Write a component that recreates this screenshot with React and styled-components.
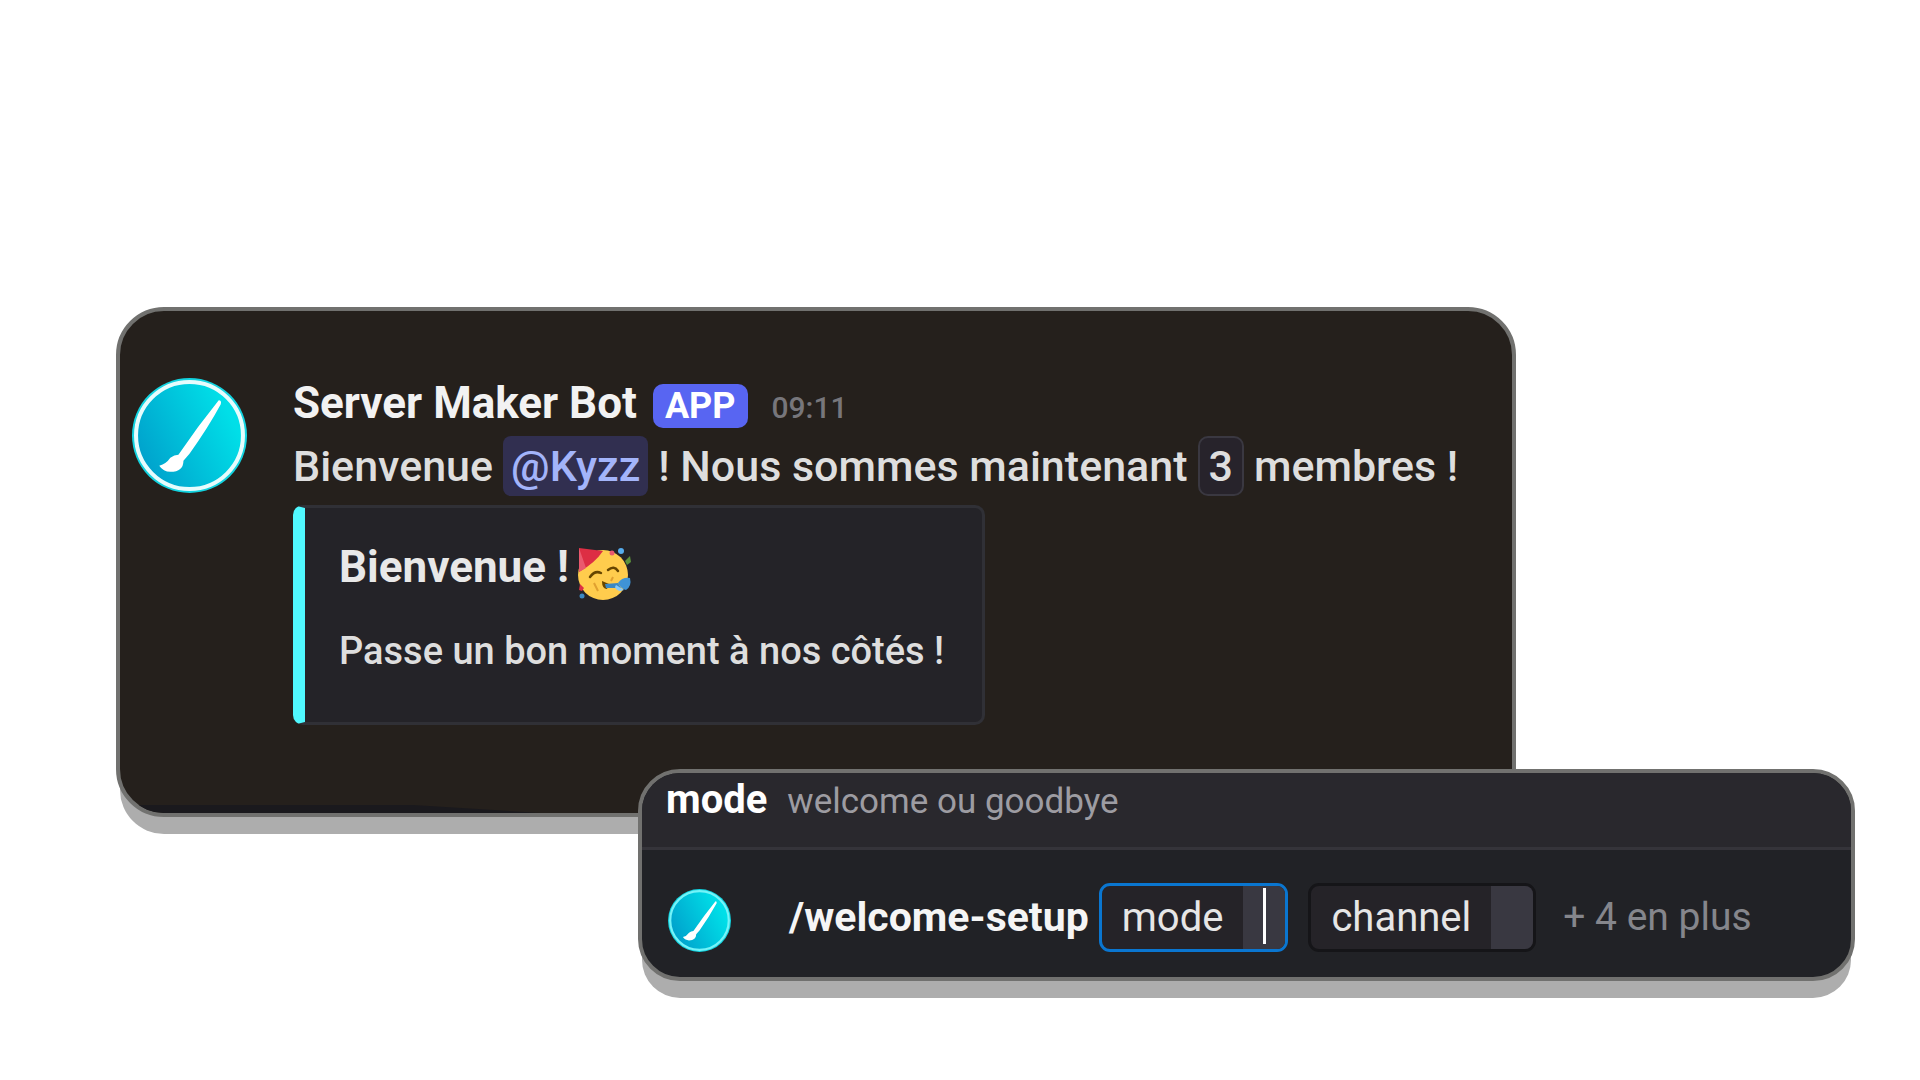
import React from "react";
import styled, { createGlobalStyle } from "styled-components";

const GlobalStyle = createGlobalStyle`
  * { box-sizing: border-box; }
  body { margin: 0; background: #fff; font-family: Roboto, "Noto Sans", sans-serif; }
`;

const Page = styled.main`
  display: flex;
  flex-direction: column;
  padding: 307px 65px 82px 116px;
`;

const Card = styled.section`
  width: 100%;
  border: 4px solid #71716f;
  overflow: hidden;
  box-shadow: 0 21px 0 -4px #adadad;
`;

const ChatCard = styled(Card)`
  max-width: 1400px;
  border-radius: 48px;
  background: #25201c;
`;

const CommandCard = styled(Card)`
  position: relative;
  max-width: 1217px;
  margin: -48px 0 0 auto;
  border-radius: 42px;
  background: #212226;
`;

const Message = styled.article`
  display: flex;
  align-items: flex-start;
  gap: 46px;
  padding: 67px 12px 80px;
`;

const Avatar = styled.svg`
  flex: none;
  display: block;
  width: ${(p) => p.$size}px;
  height: ${(p) => p.$size}px;
`;

const Content = styled.div`
  flex: 1;
  min-width: 0;
`;

const Heading = styled.header`
  display: flex;
  align-items: baseline;
  height: 58px;
  line-height: 50px;
`;

const Author = styled.h2`
  margin: 0;
  color: #f2f2f2;
  font-size: 44px;
  font-weight: 700;
  line-height: 50px;
`;

const Badge = styled.span`
  margin-left: 16px;
  padding: 0 12px;
  border-radius: 10px;
  background: #5865f2;
  color: #fff;
  font-size: 36px;
  font-weight: 700;
  line-height: 44px;
`;

const Time = styled.time`
  margin-left: 24px;
  color: #77767b;
  font-size: 30px;
  font-weight: 500;
`;

const Line = styled.p`
  display: flex;
  align-items: center;
  margin: 0;
  color: #dedede;
  font-size: 43px;
  font-weight: 500;
  line-height: 60px;
  white-space: nowrap;
`;

const Mention = styled.a`
  margin: 0 10px;
  padding: 0 8px;
  border-radius: 8px;
  background: #312f50;
  color: #a3b4fa;
  text-decoration: none;
`;

const Count = styled.code`
  margin: 0 10px;
  padding: 0 9px;
  border: 2px solid #3a3841;
  border-radius: 10px;
  background: #27232b;
  font-family: inherit;
  line-height: 56px;
`;

const Embed = styled.div`
  width: fit-content;
  margin-top: 9px;
  padding: 33px 38px 41px 34px;
  border: 3px solid #303036;
  border-left: 12px solid #50f8ff;
  border-radius: 10px;
  background: #242328;
`;

const EmbedTitle = styled.h3`
  display: flex;
  align-items: flex-start;
  gap: 9px;
  margin: 0;
  color: #e8e8e8;
  font-size: 44px;
  font-weight: 700;
  line-height: 52px;
`;

const Emoji = styled.svg`
  width: 54px;
  height: 60px;
  padding-top: 6px;
`;

const EmbedText = styled.p`
  margin: 20px 0 0;
  color: #dedede;
  font-size: 38px;
  font-weight: 500;
  line-height: 60px;
`;

const Wave = styled.svg`
  display: block;
  width: 100%;
  height: 8px;
`;

const Hint = styled.header`
  display: flex;
  align-items: baseline;
  gap: 20px;
  height: 77px;
  padding-left: 24px;
  border-bottom: 3px solid #35343a;
  background: #29282d;
  line-height: 54px;
`;

const HintName = styled.strong`
  color: #fff;
  font-size: 40px;
`;

const HintText = styled.span`
  color: #9d9ca2;
  font-size: 35px;
`;

const CommandRow = styled.form`
  display: flex;
  align-items: flex-end;
  padding: 33px 24px 25px 26px;
  font-size: 40px;
  line-height: 69px;
  white-space: nowrap;
`;

const CommandName = styled.strong`
  margin: 0 10px 0 58px;
  color: #f5f5f5;
  font-size: 41px;
`;

const Option = styled.label`
  display: flex;
  align-items: stretch;
  height: 69px;
  margin-right: 20px;
  border: 3px solid ${(p) => (p.$active ? "#0a76d0" : "#151518")};
  border-radius: 11px;
  overflow: hidden;
  background: #252328;
  color: #e6e6e6;
  line-height: 63px;
`;

const OptionName = styled.span`
  padding: 0 20px;
`;

const OptionValue = styled.input`
  width: 42px;
  padding: 0;
  border: 0;
  outline: 0;
  background: ${(p) => (p.$active ? "linear-gradient(#fff, #fff) 20px 2px / 3px 56px no-repeat" : "none")} #393841;
`;

const More = styled.button`
  padding: 0 7px;
  border: 0;
  background: none;
  color: #85868c;
  font: inherit;
  font-size: 39px;
`;

function BotAvatar({ size, id, ring }) {
  return (
    <Avatar $size={size} viewBox="0 0 114 114" role="img" aria-label="Server Maker Bot">
      <defs>
        <linearGradient id={id} x1="0.1" y1="0.75" x2="0.9" y2="0.35">
          <stop offset="0" stopColor="#00a4cd" />
          <stop offset="1" stopColor="#00dfe8" />
        </linearGradient>
      </defs>
      <circle cx="57" cy="57" r="57" fill="#12d3e0" />
      <circle cx="57" cy="57" r="53" fill={`url(#${id})`} stroke={ring} strokeWidth="4" />
      <path
        d="M86 22Q89 22 88 26Q75 50 57 75L51 82Q51 93 38 93Q31 93 27 87Q34 85 38 79Q42 76 46 76Q65 48 86 22Z"
        fill="#fff"
      />
    </Avatar>
  );
}

function PartyFace() {
  return (
    <Emoji viewBox="0 0 54 54" role="img" aria-label="fête">
      <circle cx="25" cy="28" r="25" fill="#ffcc4d" />
      <path d="M1 1L25 4Q17 16 1 25Z" fill="#dd2e44" />
      <path d="M1 1L8 21L1 25Z" fill="#ea596e" />
      <path d="M12 30Q17 23 23 26M30 23Q36 18 40 24" fill="none" stroke="#664500" strokeWidth="2.5" strokeLinecap="round" />
      <path d="M16 36L20 44M35 30L33 34" stroke="#e0a030" strokeWidth="2" />
      <path d="M24 34L31 37L29 42Q24 42 24 34Z" fill="#664500" />
      <path d="M27 37L40 36L43 41L28 41Z" fill="#3b88c3" />
      <path d="M38 38L46 43L42 44Q38 43 37 40Z" fill="#88c9f9" />
      <path d="M40 36Q44 30 52 31Q54 39 48 43Q43 42 40 36Z" fill="#3f93d6" />
      <circle cx="43" cy="4" r="3" fill="#55acee" />
      <circle cx="4" cy="49" r="2.5" fill="#3b88c3" />
      <path d="M47 14L52 9L53 15L49 18Z" fill="#5c913b" />
      <path d="M2 37L6 41L4 44L1 43Z" fill="#dd2e44" />
      <circle cx="34" cy="6" r="2.5" fill="#ea596e" />
    </Emoji>
  );
}

function CommandOption({ name, active }) {
  return (
    <Option $active={active}>
      <OptionName>{name}</OptionName>
      <OptionValue type="text" $active={active} />
    </Option>
  );
}

export default function App() {
  return (
    <>
      <GlobalStyle />
      <Page>
        <ChatCard>
          <Message>
            <BotAvatar size={115} id="avatarLarge" ring="#e6fcfd" />
            <Content>
              <Heading>
                <Author>Server Maker Bot</Author>
                <Badge>APP</Badge>
                <Time>09:11</Time>
              </Heading>
              <Line>
                <span>Bienvenue</span>
                <Mention href="#kyzz">@Kyzz</Mention>
                <span>! Nous sommes maintenant</span>
                <Count>3</Count>
                <span>membres !</span>
              </Line>
              <Embed>
                <EmbedTitle>
                  Bienvenue !
                  <PartyFace />
                </EmbedTitle>
                <EmbedText>Passe un bon moment à nos côtés !</EmbedText>
              </Embed>
            </Content>
          </Message>
          <Wave viewBox="0 0 1392 8" preserveAspectRatio="none" aria-hidden="true">
            <path d="M0 0H293L420 8H0Z" fill="#1a191d" />
          </Wave>
        </ChatCard>
        <CommandCard>
          <Hint>
            <HintName>mode</HintName>
            <HintText>welcome ou goodbye</HintText>
          </Hint>
          <CommandRow>
            <BotAvatar size={63} id="avatarSmall" ring="#74f3f8" />
            <CommandName>/welcome-setup</CommandName>
            <CommandOption name="mode" active />
            <CommandOption name="channel" />
            <More type="button">+ 4 en plus</More>
          </CommandRow>
        </CommandCard>
      </Page>
    </>
  );
}
